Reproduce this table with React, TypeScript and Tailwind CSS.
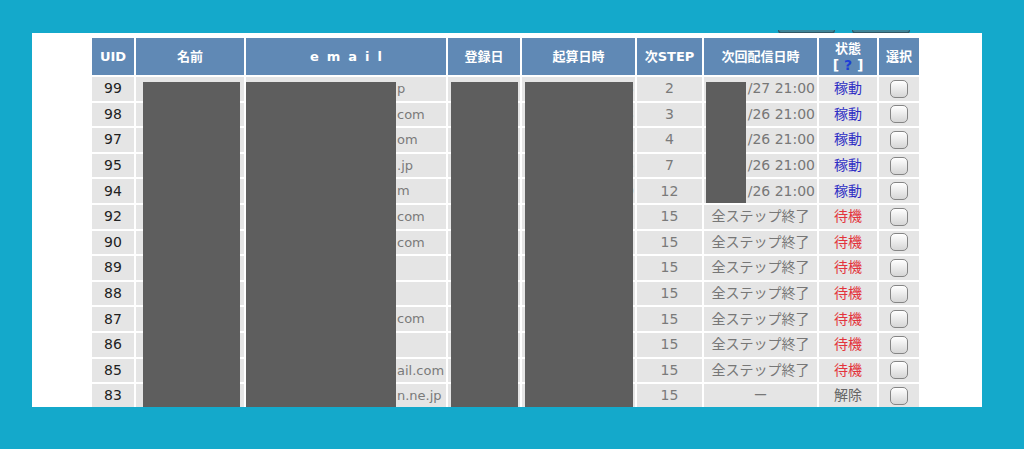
import { useState } from 'react';

type Status = 'active' | 'wait' | 'off';

interface Row {
  uid: number;
  email: string;
  step: number;
  next: string;
  status: Status;
  kisan?: string;
}

const rows: Row[] = [
  { uid: 99, email: 'p', step: 2, next: '/27 21:00', status: 'active', kisan: '21:03' },
  { uid: 98, email: 'com', step: 3, next: '/26 21:00', status: 'active', kisan: '21:03' },
  { uid: 97, email: 'om', step: 4, next: '/26 21:00', status: 'active', kisan: '21:05' },
  { uid: 95, email: '.jp', step: 7, next: '/26 21:00', status: 'active', kisan: '21:05' },
  { uid: 94, email: 'm', step: 12, next: '/26 21:00', status: 'active', kisan: '21:09' },
  { uid: 92, email: 'com', step: 15, next: '全ステップ終了', status: 'wait' },
  { uid: 90, email: 'com', step: 15, next: '全ステップ終了', status: 'wait' },
  { uid: 89, email: '', step: 15, next: '全ステップ終了', status: 'wait' },
  { uid: 88, email: '', step: 15, next: '全ステップ終了', status: 'wait' },
  { uid: 87, email: 'com', step: 15, next: '全ステップ終了', status: 'wait' },
  { uid: 86, email: '', step: 15, next: '全ステップ終了', status: 'wait' },
  { uid: 85, email: 'ail.com', step: 15, next: '全ステップ終了', status: 'wait' },
  { uid: 83, email: 'n.ne.jp', step: 15, next: 'ー', status: 'off' },
];

const statusLabel: Record<Status, string> = { active: '稼動', wait: '待機', off: '解除' };
const statusColor: Record<Status, string> = {
  active: 'text-[#2f2fc4]',
  wait: 'text-[#e3343c]',
  off: 'text-[#666666]',
};

const head = 'bg-[#6089b5] text-white font-bold text-[13px] flex items-center justify-center text-center';
const cell = 'bg-[#e5e5e5] flex items-center overflow-hidden whitespace-nowrap';

function Check({ on, toggle }: { on: boolean; toggle: () => void }) {
  return (
    <button
      onClick={toggle}
      className="w-[18px] h-[18px] rounded-[5px] border border-[#858585] bg-gradient-to-b from-white to-[#d6d6d6] shadow-[inset_0_1px_0_#fff] flex items-center justify-center text-[11px] leading-none text-[#333]"
    >
      {on ? '✓' : ''}
    </button>
  );
}

export default function App() {
  const [checked, setChecked] = useState<Record<number, boolean>>({});

  return (
    <div
      className="w-[1024px] h-[449px] bg-[#14a9cb] pt-[33px] pl-[32px] relative"
      style={{ fontFamily: '"DejaVu Sans", "Noto Sans CJK JP", sans-serif' }}
    >
      {/* bottoms of the buttons above the cropped area */}
      <div className="absolute top-[30px] left-[778px] w-[57px] h-[4px] rounded-b-[8px] border-b-2 border-x border-[#2f5866] bg-[#3f8598]" />
      <div className="absolute top-[30px] left-[852px] w-[58px] h-[4px] rounded-b-[8px] border-b-2 border-x border-[#2f5866] bg-[#3f8598]" />

      <div className="relative w-[950px] h-[374px] bg-white overflow-hidden pt-[5px] pl-[60px] text-[14px]">
        <div className="grid grid-cols-[42px_108px_200px_72px_113px_65px_113px_58px_40px] grid-rows-[37px] auto-rows-[23.6px] gap-[2px] w-[827px]">
          <div className={head}>UID</div>
          <div className={head}>名前</div>
          <div className={`${head} tracking-[8px] pl-[8px]`}>email</div>
          <div className={head}>登録日</div>
          <div className={head}>起算日時</div>
          <div className={head}>次STEP</div>
          <div className={head}>次回配信日時</div>
          <div className={`${head} flex-col leading-[16px]`}>
            <span>状態</span>
            <span className="text-[14px]">
              [ <span className="text-[#1d3fd6]">?</span> ]
            </span>
          </div>
          <div className={head}>選択</div>

          {rows.map((r) => (
            <div key={r.uid} className="contents">
              <div className={`${cell} justify-center text-[#222]`}>{r.uid}</div>
              <div className={cell} />
              <div className={`${cell} pl-[151px] text-[13px] text-[#7a7a7a]`}>{r.email}</div>
              <div className={cell} />
              <div className={`${cell} justify-end pr-[1px] text-[#7a7a7a]`}>{r.kisan ?? ''}</div>
              <div className={`${cell} justify-center text-[#7a7a7a]`}>{r.step}</div>
              <div
                className={`${cell} ${r.status === 'active' ? 'justify-end pr-[2px]' : 'justify-center'} text-[#777]`}
              >
                {r.next}
              </div>
              <div className={`${cell} justify-center ${statusColor[r.status]}`}>{statusLabel[r.status]}</div>
              <div className={`${cell} justify-center`}>
                <Check
                  on={!!checked[r.uid]}
                  toggle={() => setChecked({ ...checked, [r.uid]: !checked[r.uid] })}
                />
              </div>
            </div>
          ))}
        </div>

        {/* redaction boxes */}
        <div className="absolute top-[49px] left-[111px] w-[97px] h-[330px] bg-[#5e5e5e]" />
        <div className="absolute top-[49px] left-[214px] w-[150px] h-[330px] bg-[#5e5e5e]" />
        <div className="absolute top-[49px] left-[419px] w-[67px] h-[330px] bg-[#5e5e5e]" />
        <div className="absolute top-[49px] left-[493px] w-[108px] h-[330px] bg-[#5e5e5e]" />
        <div className="absolute top-[49px] left-[674px] w-[40px] h-[121px] bg-[#5e5e5e]" />
      </div>
    </div>
  );
}
